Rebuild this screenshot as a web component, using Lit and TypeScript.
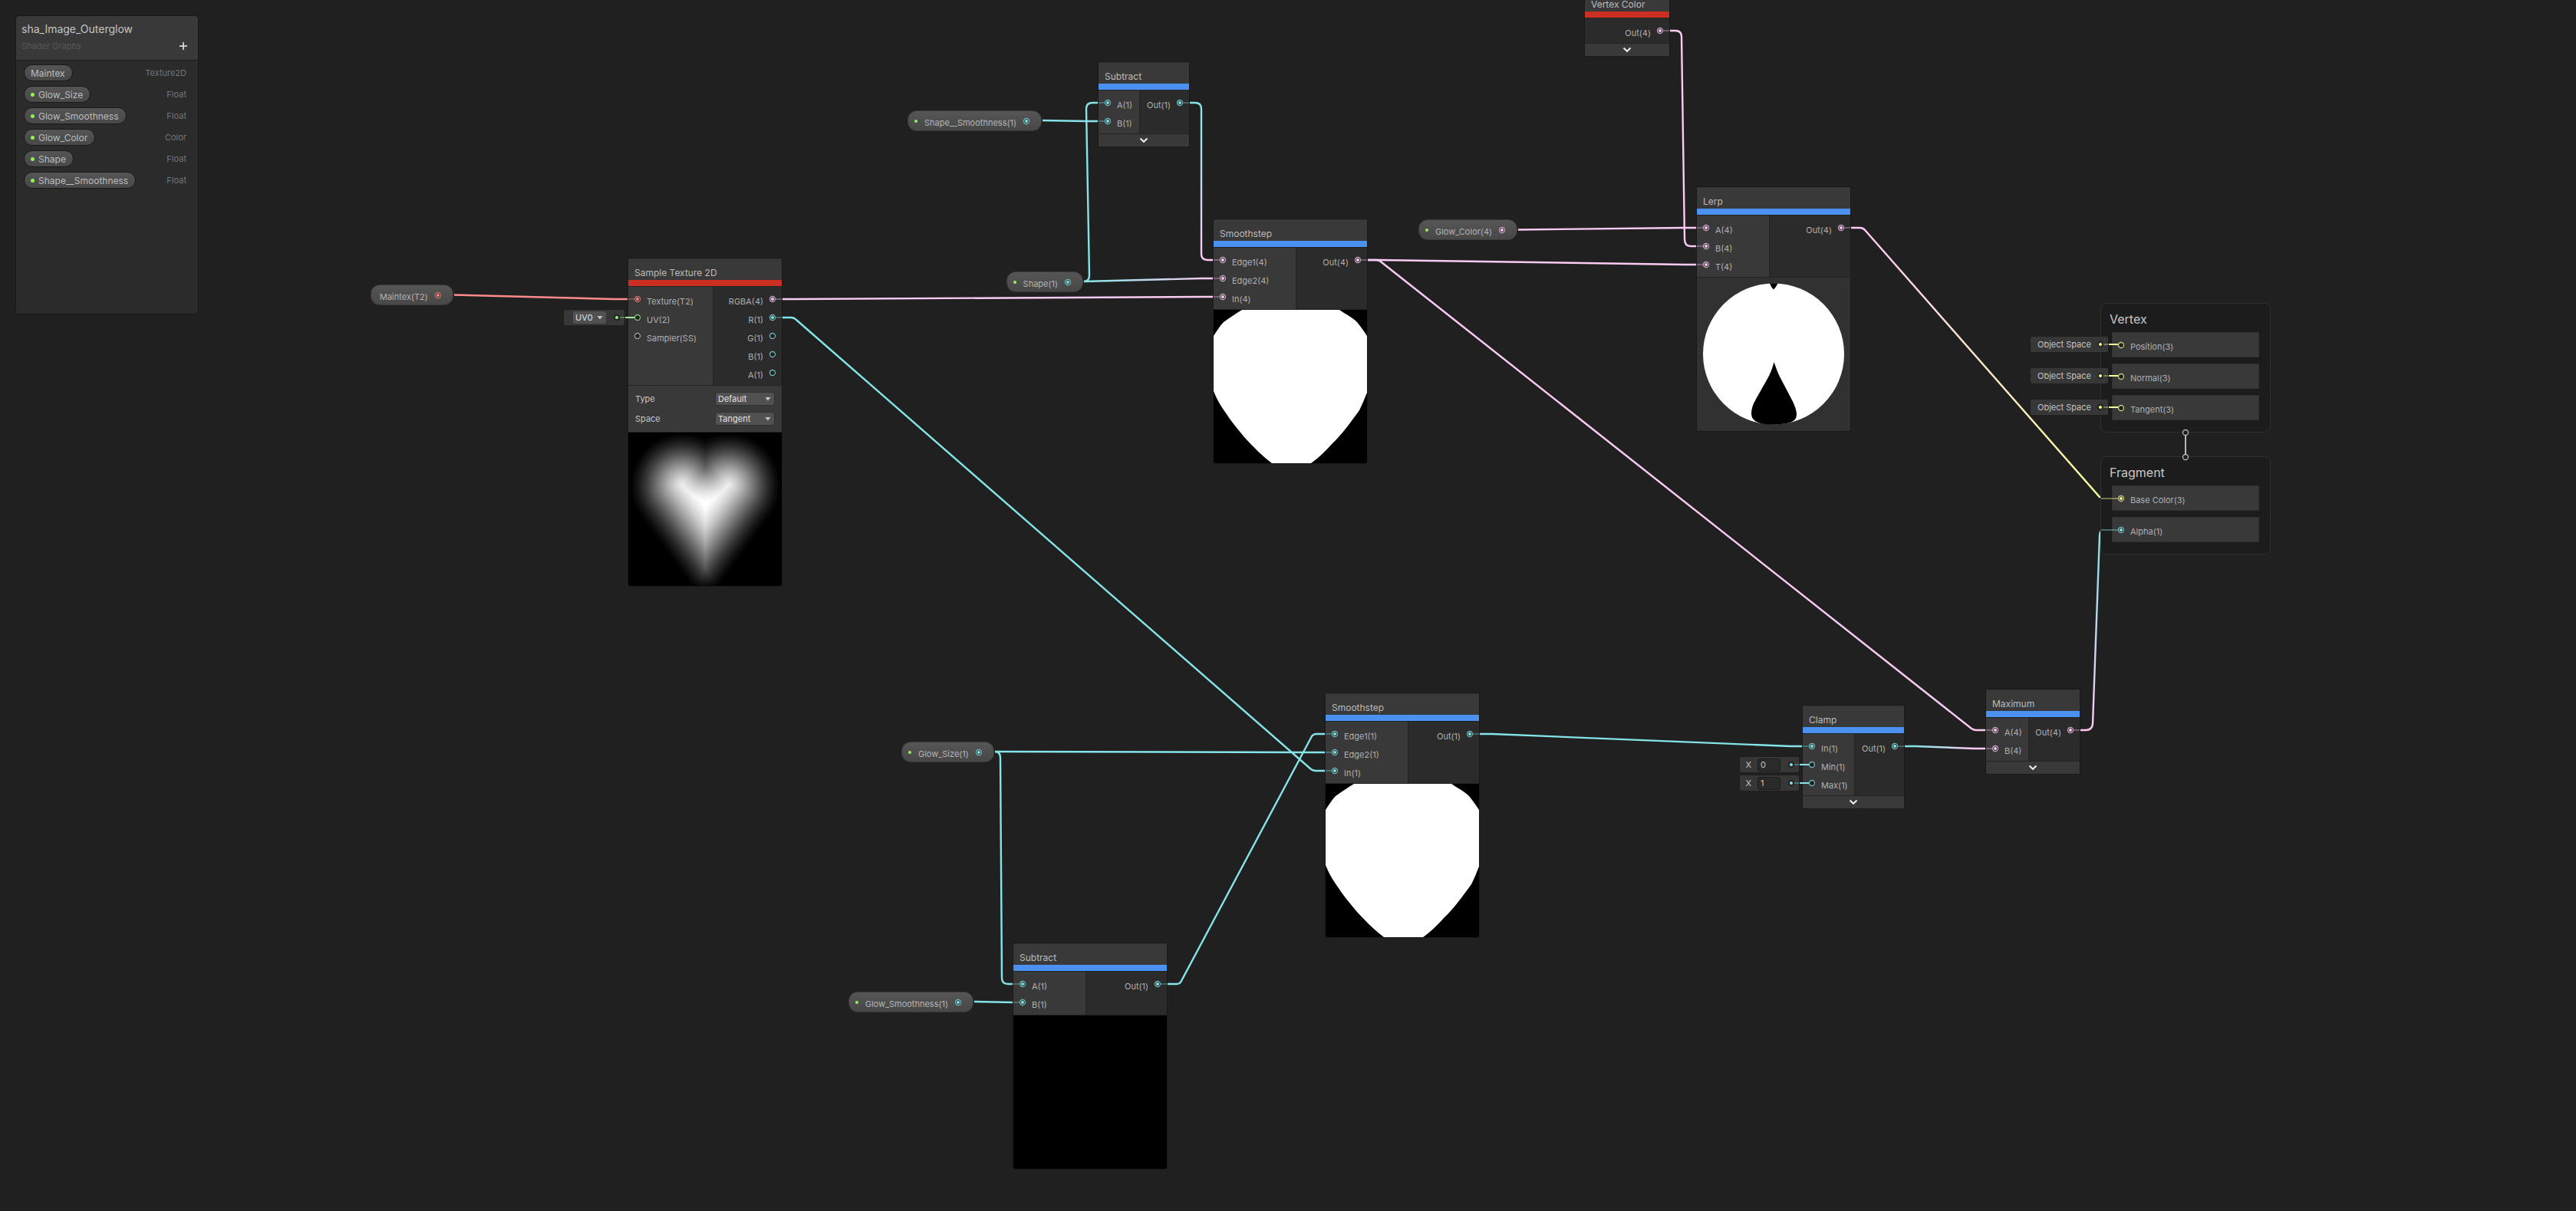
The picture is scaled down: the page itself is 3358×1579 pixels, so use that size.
import { LitElement, html, svg, css, nothing } from "lit";
import { customElement } from "lit/decorators.js";
import { classMap } from "lit/directives/class-map.js";
import { styleMap } from "lit/directives/style-map.js";

type Kind = "scalar" | "vec2" | "vec3" | "vec4" | "texture" | "sampler";

interface Port {
  label: string;
  kind: Kind;
  on?: boolean;
}

interface NodeSpec {
  x: number;
  y: number;
  w: number;
  split: number;
  title: string;
  accent: "red" | "blue";
  inputs: Port[];
  outputs: Port[];
  controls?: { label: string; options: string[] }[];
  preview?: "glow" | "mask" | "sphere" | "black";
}

const COLORS: Record<Kind, string> = {
  scalar: "#84e4e7",
  vec2: "#9aef92",
  vec3: "#f6ff9a",
  vec4: "#fbcbf4",
  texture: "#ff8b8b",
  sampler: "#c4c4c4",
};

const p = (label: string, kind: Kind, on = true): Port => ({ label, kind, on });

const NODES: NodeSpec[] = [
  {
    x: 819, y: 337, w: 200, split: 110, title: "Sample Texture 2D", accent: "red",
    inputs: [p("Texture(T2)", "texture"), p("UV(2)", "vec2", false), p("Sampler(SS)", "sampler", false)],
    outputs: [
      p("RGBA(4)", "vec4"), p("R(1)", "scalar"), p("G(1)", "scalar", false),
      p("B(1)", "scalar", false), p("A(1)", "scalar", false),
    ],
    controls: [
      { label: "Type", options: ["Default", "Normal"] },
      { label: "Space", options: ["Tangent", "Object"] },
    ],
    preview: "glow",
  },
  {
    x: 1432, y: 81, w: 118, split: 53, title: "Subtract", accent: "blue",
    inputs: [p("A(1)", "scalar"), p("B(1)", "scalar")],
    outputs: [p("Out(1)", "scalar")],
  },
  {
    x: 1582, y: 286, w: 200, split: 107, title: "Smoothstep", accent: "blue",
    inputs: [p("Edge1(4)", "vec4"), p("Edge2(4)", "vec4"), p("In(4)", "vec4")],
    outputs: [p("Out(4)", "vec4")],
    preview: "mask",
  },
  {
    x: 2066, y: -13, w: 110, split: 0, title: "Vertex Color", accent: "red",
    inputs: [],
    outputs: [p("Out(4)", "vec4")],
  },
  {
    x: 2212, y: 244, w: 200, split: 94, title: "Lerp", accent: "blue",
    inputs: [p("A(4)", "vec4"), p("B(4)", "vec4"), p("T(4)", "vec4")],
    outputs: [p("Out(4)", "vec4")],
    preview: "sphere",
  },
  {
    x: 1728, y: 904, w: 200, split: 107, title: "Smoothstep", accent: "blue",
    inputs: [p("Edge1(1)", "scalar"), p("Edge2(1)", "scalar"), p("In(1)", "scalar")],
    outputs: [p("Out(1)", "scalar")],
    preview: "mask",
  },
  {
    x: 1321, y: 1230, w: 200, split: 94, title: "Subtract", accent: "blue",
    inputs: [p("A(1)", "scalar"), p("B(1)", "scalar")],
    outputs: [p("Out(1)", "scalar")],
    preview: "black",
  },
  {
    x: 2350, y: 920, w: 132, split: 67, title: "Clamp", accent: "blue",
    inputs: [p("In(1)", "scalar"), p("Min(1)", "scalar", false), p("Max(1)", "scalar", false)],
    outputs: [p("Out(1)", "scalar")],
  },
  {
    x: 2589, y: 899, w: 122, split: 55, title: "Maximum", accent: "blue",
    inputs: [p("A(4)", "vec4"), p("B(4)", "vec4")],
    outputs: [p("Out(4)", "vec4")],
  },
];

const TOKENS = [
  { x: 483, y: 371, w: 108, label: "Maintex(T2)", kind: "texture" as Kind, exposed: false },
  { x: 1183, y: 144, w: 175, label: "Shape__Smoothness(1)", kind: "scalar" as Kind, exposed: true },
  { x: 1312, y: 354, w: 100, label: "Shape(1)", kind: "scalar" as Kind, exposed: true },
  { x: 1849, y: 286, w: 129, label: "Glow_Color(4)", kind: "vec4" as Kind, exposed: true },
  { x: 1175, y: 967, w: 121, label: "Glow_Size(1)", kind: "scalar" as Kind, exposed: true },
  { x: 1106, y: 1293, w: 163, label: "Glow_Smoothness(1)", kind: "scalar" as Kind, exposed: true },
];

const BLOCKS = [
  {
    x: 2738, y: 395, title: "Vertex",
    rows: [p("Position(3)", "vec3", false), p("Normal(3)", "vec3", false), p("Tangent(3)", "vec3", false)],
  },
  { x: 2738, y: 595, title: "Fragment", rows: [p("Base Color(3)", "vec3"), p("Alpha(1)", "scalar")] },
];

const PROPERTIES = [
  { name: "Maintex", type: "Texture2D", exposed: false },
  { name: "Glow_Size", type: "Float", exposed: true },
  { name: "Glow_Smoothness", type: "Float", exposed: true },
  { name: "Glow_Color", type: "Color", exposed: true },
  { name: "Shape", type: "Float", exposed: true },
  { name: "Shape__Smoothness", type: "Float", exposed: true },
];

interface Wire {
  d: string;
  from: Kind;
  to?: Kind;
  line?: [number, number, number, number];
}

const WIRES: Wire[] = [
  { d: "M592 384.5 L800 390 H819", from: "texture" },
  { d: "M1020 390 H1036 L1566 387 H1582", from: "vec4" },
  { d: "M1020 414 H1031 Q1035 414 1038 417 L1709 1003 Q1712 1005 1715 1005 H1728", from: "scalar" },
  { d: "M1551 134 H1558 Q1566 134 1566 142 V331 Q1566 339 1574 339 H1582", from: "scalar", to: "vec4", line: [1566, 134, 1566, 339] },
  { d: "M1413 367 Q1420 367 1420 359 L1416 142 Q1416 134 1424 134 H1432", from: "scalar" },
  { d: "M1413 367 L1566 363 H1582", from: "scalar", to: "vec4", line: [1413, 367, 1582, 363] },
  { d: "M1359 157 L1416 158 H1432", from: "scalar" },
  { d: "M1783 339 H1798 L2196 345 H2212", from: "vec4" },
  { d: "M1783 339 H1794 Q1798 339 1801 342 L2570 950 Q2573 952 2576 952 H2589", from: "vec4" },
  { d: "M1979 299.5 L2196 297 H2212", from: "vec4" },
  { d: "M2177 40 H2184 Q2192 40 2192 48 L2196 312 Q2196 321 2204 321 H2212", from: "vec4" },
  { d: "M2413 297 H2424 Q2429 297 2432 301 L2737 648 H2739", from: "vec4", to: "vec3", line: [2429, 297, 2737, 648] },
  { d: "M2712 952 H2719 Q2727 952 2728 944 L2737 698 Q2737 694 2739 692", from: "vec4", to: "scalar", line: [2728, 952, 2737, 694] },
  { d: "M1297 980 L1712 981 H1728", from: "scalar" },
  { d: "M1297 980 Q1304 980 1304 988 L1306 1275 Q1306 1283 1314 1283 H1321", from: "scalar" },
  { d: "M1270 1306 L1321 1307", from: "scalar" },
  { d: "M1522 1283 H1534 Q1538 1283 1540 1279 L1710 960 Q1712 957 1716 957 H1728", from: "scalar" },
  { d: "M1929 957 H1945 L2334 973 H2350", from: "scalar" },
  { d: "M2483 973 H2498 L2573 976 H2589", from: "scalar", to: "vec4", line: [2498, 973, 2573, 976] },
];

const shared = css`
  * { box-sizing: border-box; }
  .port {
    flex: none;
    position: relative;
    width: 8px;
    height: 8px;
    display: block;
    color: var(--kind);
  }
  .port svg { display: block; width: 8px; height: 8px; overflow: visible; }
  .label { margin-top: 4px; line-height: 14px; color: #b0b0b0; white-space: nowrap; }
  .scalar { --kind: #84e4e7; }
  .vec2 { --kind: #9aef92; }
  .vec3 { --kind: #f6ff9a; }
  .vec4 { --kind: #fbcbf4; }
  .texture { --kind: #ff8b8b; }
  .sampler { --kind: #c4c4c4; }
`;

const portIcon = (port: Port, stub = "") => html`
  <span class=${classMap({ port: true, [port.kind]: true, stub: !!port.on && stub !== "", [stub || "plain"]: true })}>
    <svg viewBox="0 0 8 8" aria-hidden="true">
      <circle cx="4" cy="4" r="3.5" fill="#1e1e1e" stroke="currentColor" stroke-opacity=".75" stroke-width="1.3"></circle>
      ${port.on ? svg`<circle cx="4" cy="4" r="2" fill="currentColor"></circle>` : nothing}
    </svg>
  </span>
`;

/** Soft heart: brightness follows the signed distance from a heart outline. */
function paintGlow(canvas: HTMLCanvasElement) {
  const ctx = canvas.getContext("2d");
  if (!ctx) return;
  const cx = 70, cy = 68, r = 40, ax = 100, ay = 177;
  const dx = ax - cx, dy = ay - cy;
  const dist = Math.hypot(dx, dy);
  const axis = Math.atan2(dy, dx);
  const tangent = axis + Math.acos(r / dist);
  const cusp = -Math.acos((100 - cx) / r);
  const end = tangent - Math.PI * 2;
  const pts: [number, number][] = [];
  for (let i = 0; i <= 100; i++) {
    const a = cusp + ((end - cusp) * i) / 100;
    pts.push([cx + r * Math.cos(a), cy + r * Math.sin(a)]);
  }
  const last = pts[pts.length - 1];
  for (let i = 1; i <= 80; i++) {
    pts.push([last[0] + ((ax - last[0]) * i) / 80, last[1] + ((ay - last[1]) * i) / 80]);
  }
  const image = ctx.createImageData(200, 200);
  for (let y = 0; y < 200; y++) {
    for (let x = 0; x < 200; x++) {
      const mx = x > 100 ? 200 - x : x;
      const inLobe = Math.hypot(mx - cx, y - cy) < r;
      const edge = last[0] + ((ax - last[0]) * (y - last[1])) / (ay - last[1]);
      const inCone = y > last[1] && y < ay && mx > edge;
      const inside = inLobe || inCone || (mx > cx && y > cy && y <= last[1]);
      let best = 1e6;
      for (const q of pts) {
        const d = (mx - q[0]) ** 2 + (y - q[1]) ** 2;
        if (d < best) best = d;
      }
      best = Math.sqrt(best) * (inside ? 1 : -1);
      const s = Math.max(0, Math.min(1, (best + 28) / 76));
      const v = 255 * (0.5 * s + 0.5 * s * s * (3 - 2 * s));
      const o = (y * 200 + x) * 4;
      image.data[o] = image.data[o + 1] = image.data[o + 2] = v;
      image.data[o + 3] = 255;
    }
  }
  ctx.putImageData(image, 0, 0);
}

@customElement("graph-node")
class GraphNode extends LitElement {
  static properties = { spec: { attribute: false } };
  declare spec: NodeSpec;

  static styles = [
    shared,
    css`
      :host { display: block; box-shadow: 0 0 0 1px #1a1a1a; background: #232323; font-size: 11px; }
      .title {
        height: 28px;
        margin: 0;
        padding: 12px 8px 0;
        font-size: 12px;
        font-weight: 400;
        line-height: 14px;
        color: #bcbcbc;
        background: #393939;
        white-space: nowrap;
        box-shadow: inset 0 1px #323232;
      }
      .bar { height: 8px; margin-bottom: 1px; }
      .bar.red { background: #cb2f22; }
      .bar.blue { background: #4a91f2; }
      .ports { display: flex; gap: 1px; }
      .inputs { flex: none; padding: 4px 0 4px 8px; background: #393939; }
      .outputs { flex: 1; padding: 4px 8px; background: #2b2b2b; }
      .row { display: flex; align-items: center; gap: 8px; height: 24px; }
      .row .label { margin-top: 6px; }
      .outputs .row { justify-content: flex-end; }
      .stub::before {
        content: "";
        position: absolute;
        top: 3px;
        width: 8px;
        height: 2px;
        background: var(--kind);
        opacity: .3;
      }
      .in::before { right: 8px; }
      .out::before { left: 8px; }
      .controls {
        display: flex;
        flex-direction: column;
        gap: 10px;
        margin-top: 1px;
        padding: 9px;
        background: #393939;
      }
      .control { display: flex; align-items: center; justify-content: space-between; height: 16px; color: #c4c4c4; }
      .pick { position: relative; width: 78px; height: 18px; }
      .pick svg { position: absolute; right: 5px; top: 7px; width: 8px; height: 5px; pointer-events: none; }
      select {
        appearance: none;
        width: 100%;
        height: 18px;
        margin: 0;
        padding: 0 14px 0 3px;
        border: 1px solid #303030;
        border-radius: 3px;
        font: inherit;
        color: #e0e0e0;
        background: #515151;
      }
      .fold {
        display: flex;
        align-items: center;
        justify-content: center;
        width: 100%;
        height: 16px;
        margin-top: 1px;
        padding: 0;
        border: 0;
        background: #393939;
      }
      .fold svg { width: 12px; height: 8px; }
      .preview { display: block; width: 100%; height: auto; margin-top: 1px; border-radius: 0 0 3px 3px; }
    `,
  ];

  firstUpdated() {
    const canvas = this.renderRoot.querySelector("canvas");
    if (canvas) paintGlow(canvas);
  }

  private preview() {
    switch (this.spec.preview) {
      case "glow":
        return html`<canvas class="preview" width="200" height="200"></canvas>`;
      case "mask":
        return html`<svg class="preview" viewBox="0 0 200 200" aria-hidden="true">
          <rect width="200" height="200" fill="#000"></rect>
          <path fill="#fff" d="M37 0H164C171 5 180 9 187 16C192 22 196 28 200 34V108C197 115 195 121 190 131C180 145 165 165 155 174C146 184 136 194 127 200H76C64 191 52 179 41 167C34 159 27 150 21 142C16 134 10 127 6 119C4 115 2 111 0 106V34C4 28 8 21 13 16C21 10 29 5 37 0Z"></path>
        </svg>`;
      case "sphere":
        return html`<svg class="preview" viewBox="0 0 200 200" aria-hidden="true">
          <rect width="200" height="200" fill="#313131"></rect>
          <circle cx="100" cy="99.500" r="92" fill="#fff"></circle>
          <path fill="#000" d="M95 7.500L97 12L100 15.500L103 12L105.500 7.500Q100 7 95 7.500Z"></path>
          <path fill="#000" d="M100.500 110C103 117 105 123 108 129C112 137 116 144 120 152C125 161 130 171 130 178C130 186 125 188 117 190A92 92 0 0 1 87 190.800C78 189 71 186 71 177C71 168 76 160 80 153C85 144 90 136 94 128C97 122 99 116 100.500 110Z"></path>
        </svg>`;
      default:
        return html`<svg class="preview" viewBox="0 0 200 200" aria-hidden="true">
          <rect width="200" height="200" fill="#000"></rect>
        </svg>`;
    }
  }

  render() {
    const s = this.spec;
    return html`
      <h2 class="title">${s.title}</h2>
      <div class="bar ${s.accent}"></div>
      <div class="ports">
        ${s.inputs.length
          ? html`<div class="inputs" style=${styleMap({ width: `${s.split}px` })}>
              ${s.inputs.map((i) => html`<div class="row">${portIcon(i, "in")}<span class="label">${i.label}</span></div>`)}
            </div>`
          : nothing}
        <div class="outputs">
          ${s.outputs.map((o) => html`<div class="row"><span class="label">${o.label}</span>${portIcon(o, "out")}</div>`)}
        </div>
      </div>
      ${s.controls
        ? html`<div class="controls">
            ${s.controls.map(
              (c) => html`<label class="control">
                ${c.label}
                <span class="pick">
                  <select>${c.options.map((o) => html`<option>${o}</option>`)}</select>
                  <svg viewBox="0 0 8 5" aria-hidden="true"><path d="M.5 0h7L4 4.500z" fill="#c4c4c4"></path></svg>
                </span>
              </label>`
            )}
          </div>`
        : nothing}
      ${s.preview
        ? this.preview()
        : html`<button class="fold" aria-label="Show preview">
            <svg viewBox="0 0 12 8" aria-hidden="true">
              <path d="M1.500 1.500L6 5.800L10.500 1.500" fill="none" stroke="#eee" stroke-width="2"></path>
            </svg>
          </button>`}
    `;
  }
}

@customElement("property-board")
class PropertyBoard extends LitElement {
  static styles = [
    shared,
    css`
      :host {
        display: flex;
        flex-direction: column;
        border-radius: 4px;
        box-shadow: 0 0 0 1px #191919;
        background: #2b2b2b;
        overflow: hidden;
      }
      header {
        display: grid;
        grid-template-columns: 1fr auto;
        align-items: center;
        gap: 4px 0;
        height: 57px;
        padding: 7px 11px 10px 7px;
        background: #393939;
      }
      h1 { grid-column: 1 / -1; margin: 0; font-size: 14px; font-weight: 400; line-height: 18px; color: #c4c4c4; }
      .path { font-size: 11px; line-height: 16px; color: #585858; }
      .add { display: grid; place-items: center; width: 16px; height: 16px; padding: 0; border: 0; background: none; }
      .add svg { width: 10px; height: 10px; }
      ul { flex: 1; margin: 0; padding: 2px 15px 0 10px; border-top: 1px solid #1c1c1c; list-style: none; }
      li { display: flex; align-items: center; justify-content: space-between; height: 28px; }
      .pill {
        display: flex;
        align-items: center;
        gap: 5px;
        height: 22px;
        padding: 0 9px 0 8px;
        border: 1px solid #1a1a1a;
        border-radius: 11px;
        font-size: 12px;
        color: #bcbcbc;
        background: linear-gradient(#555, #484848);
      }
      .dot { width: 5px; height: 5px; border-radius: 50%; background: #93f05a; }
      .type { font-size: 11px; color: #757575; }
    `,
  ];

  render() {
    return html`
      <header>
        <h1>sha_Image_Outerglow</h1>
        <span class="path">Shader Graphs</span>
        <button class="add" aria-label="Add property">
          <svg viewBox="0 0 10 10" aria-hidden="true"><path d="M5 0v10M0 5h10" stroke="#f0f0f0" stroke-width="1.500"></path></svg>
        </button>
      </header>
      <ul>
        ${PROPERTIES.map(
          (r) => html`<li>
            <span class="pill">${r.exposed ? html`<i class="dot"></i>` : nothing}${r.name}</span>
            <span class="type">${r.type}</span>
          </li>`
        )}
      </ul>
    `;
  }
}

@customElement("app-root")
class AppRoot extends LitElement {
  static styles = [
    shared,
    css`
      :host {
        display: block;
        position: relative;
        min-height: 100vh;
        overflow: hidden;
        font: 11px Inter, "Liberation Sans", sans-serif;
        color: #c4c4c4;
        background: #202020;
      }
      .wires { position: absolute; inset: 0; width: 100%; height: 100%; }
      .wires .wire { fill: none; stroke-width: 2.4; }
      .board { position: absolute; left: 21px; top: 21px; width: 237px; height: 388px; }
      .item { position: absolute; }
      .token {
        display: flex;
        align-items: center;
        gap: 9px;
        height: 27px;
        padding: 0 15px 0 8px;
        border: 1px solid #3a3a3a;
        border-radius: 12px;
        background: linear-gradient(#565656, #474747);
      }
      .token.bare { padding-left: 11px; }
      .token .port { margin-left: auto; }
      .token .label { color: #b4b4b4; }
      .dot { width: 4px; height: 4px; border-radius: 50%; background: #93f05a; }
      .block {
        width: 222px;
        padding: 7px 14px 15px;
        border: 1px solid #303030;
        border-radius: 8px;
        background: #1c1c1c;
      }
      .block h2 {
        height: 30px;
        margin: 0 0 0 -3px;
        font-size: 16px;
        font-weight: 400;
        line-height: 27px;
        color: #c8c8c8;
      }
      .fields { display: flex; flex-direction: column; gap: 8px; }
      .field { display: flex; align-items: center; gap: 8px; height: 33px; padding-left: 8px; background: #393939; box-shadow: inset 0 0 0 1px #303030; }
      .reach::before {
        content: "";
        position: absolute;
        right: 8px;
        top: 3px;
        width: 22px;
        height: 2px;
        background: var(--kind);
        opacity: .4;
      }
      .feed {
        display: flex;
        align-items: center;
        justify-content: flex-end;
        height: 20px;
        padding-right: 7px;
        border-radius: 2px;
        background: #373737;
        box-shadow: 0 0 0 1px #1e1e1e;
      }
      .feed .pin {
        position: relative;
        width: 6px;
        height: 6px;
        border: 1px solid #202020;
        border-radius: 50%;
        background: var(--kind);
        box-shadow: 0 0 0 1px #202020;
      }
      .pin::before { content: ""; position: absolute; left: 6px; top: 1px; width: 6px; height: 2px; background: var(--kind); opacity: .35; }
      .pin::after { content: ""; position: absolute; left: 13px; top: 1px; width: 12px; height: 2px; background: var(--kind); }
      .space { margin-right: 8px; padding-right: 1px; white-space: nowrap; }
      .slot { display: flex; align-items: center; gap: 8px; margin-right: 11px; }
      .slot input {
        width: 30px;
        height: 17px;
        padding: 0 3px;
        border: 1px solid #1c1c1c;
        border-radius: 3px;
        font: inherit;
        color: #c4c4c4;
        background: #2a2a2a;
      }
      .uv { position: relative; width: 43px; height: 16px; margin-right: 11px; }
      .uv select {
        appearance: none;
        width: 100%;
        height: 16px;
        margin: 0;
        padding: 0 3px;
        border: 0;
        border-radius: 2px;
        font: inherit;
        color: #e0e0e0;
        background: #515151;
      }
      .uv svg { position: absolute; right: 4px; top: 6px; width: 8px; height: 5px; pointer-events: none; }
    `,
  ];

  private at(x: number, y: number, w: number) {
    return styleMap({ left: `${x}px`, top: `${y}px`, width: `${w}px` });
  }

  private wires() {
    return html`<svg class="wires" aria-hidden="true">
      <defs>
        ${WIRES.map((w, i) =>
          w.line
            ? svg`<linearGradient id=${`w${i}`} gradientUnits="userSpaceOnUse" x1=${w.line[0]} y1=${w.line[1]} x2=${w.line[2]} y2=${w.line[3]}>
                <stop offset="0" stop-color=${COLORS[w.from]}></stop>
                <stop offset="1" stop-color=${COLORS[w.to ?? w.from]}></stop>
              </linearGradient>`
            : nothing
        )}
      </defs>
      ${WIRES.map((w, i) => svg`<path class="wire" d=${w.d} stroke=${w.line ? `url(#w${i})` : COLORS[w.from]}></path>`)}
    </svg>`;
  }

  render() {
    return html`
      ${this.wires()}
      ${BLOCKS.map(
        (b) => html`<section class="item block" style=${styleMap({ left: `${b.x}px`, top: `${b.y}px` })}>
          <h2>${b.title}</h2>
          <div class="fields">
            ${b.rows.map((r) => html`<div class="field">
              ${portIcon(r, r.on ? "reach" : "")}<span class="label">${r.label}</span>
            </div>`)}
          </div>
        </section>`
      )}
      <svg class="wires" aria-hidden="true">
        <g fill="none" stroke="#b8b8b8">
          <path d="M2849 568V592" stroke-width="2"></path>
          <circle cx="2849" cy="564" r="3.500" stroke-width="1.300" fill="#1c1c1c"></circle>
          <circle cx="2849" cy="596" r="3.500" stroke-width="1.300" fill="#1c1c1c"></circle>
        </g>
      </svg>
      ${TOKENS.map(
        (t) => html`<div class=${classMap({ item: true, token: true, bare: !t.exposed })} style=${this.at(t.x, t.y, t.w)}>
          ${t.exposed ? html`<i class="dot"></i>` : nothing}
          <span class="label">${t.label}</span>
          ${portIcon(p(t.label, t.kind))}
        </div>`
      )}
      ${NODES.map((n) => html`<graph-node class="item" .spec=${n} style=${this.at(n.x, n.y, n.w)}></graph-node>`)}
      <div class="item feed vec2" style=${this.at(735, 404, 79)}>
        <span class="uv">
          <select aria-label="UV channel"><option>UV0</option><option>UV1</option></select>
          <svg viewBox="0 0 8 5" aria-hidden="true"><path d="M.5 0h7L4 4.500z" fill="#c4c4c4"></path></svg>
        </span>
        <i class="pin"></i>
      </div>
      ${[449, 490, 531].map(
        (y) => html`<div class="item feed vec3" style=${this.at(2647, y - 10, 101)}>
          <span class="space">Object Space</span><i class="pin"></i>
        </div>`
      )}
      ${[
        { y: 997, v: "0" },
        { y: 1021, v: "1" },
      ].map(
        (f) => html`<div class="item feed scalar" style=${this.at(2268, f.y - 10, 77)}>
          <label class="slot">X <input .value=${f.v} /></label><i class="pin"></i>
        </div>`
      )}
      <property-board class="board"></property-board>
    `;
  }
}
